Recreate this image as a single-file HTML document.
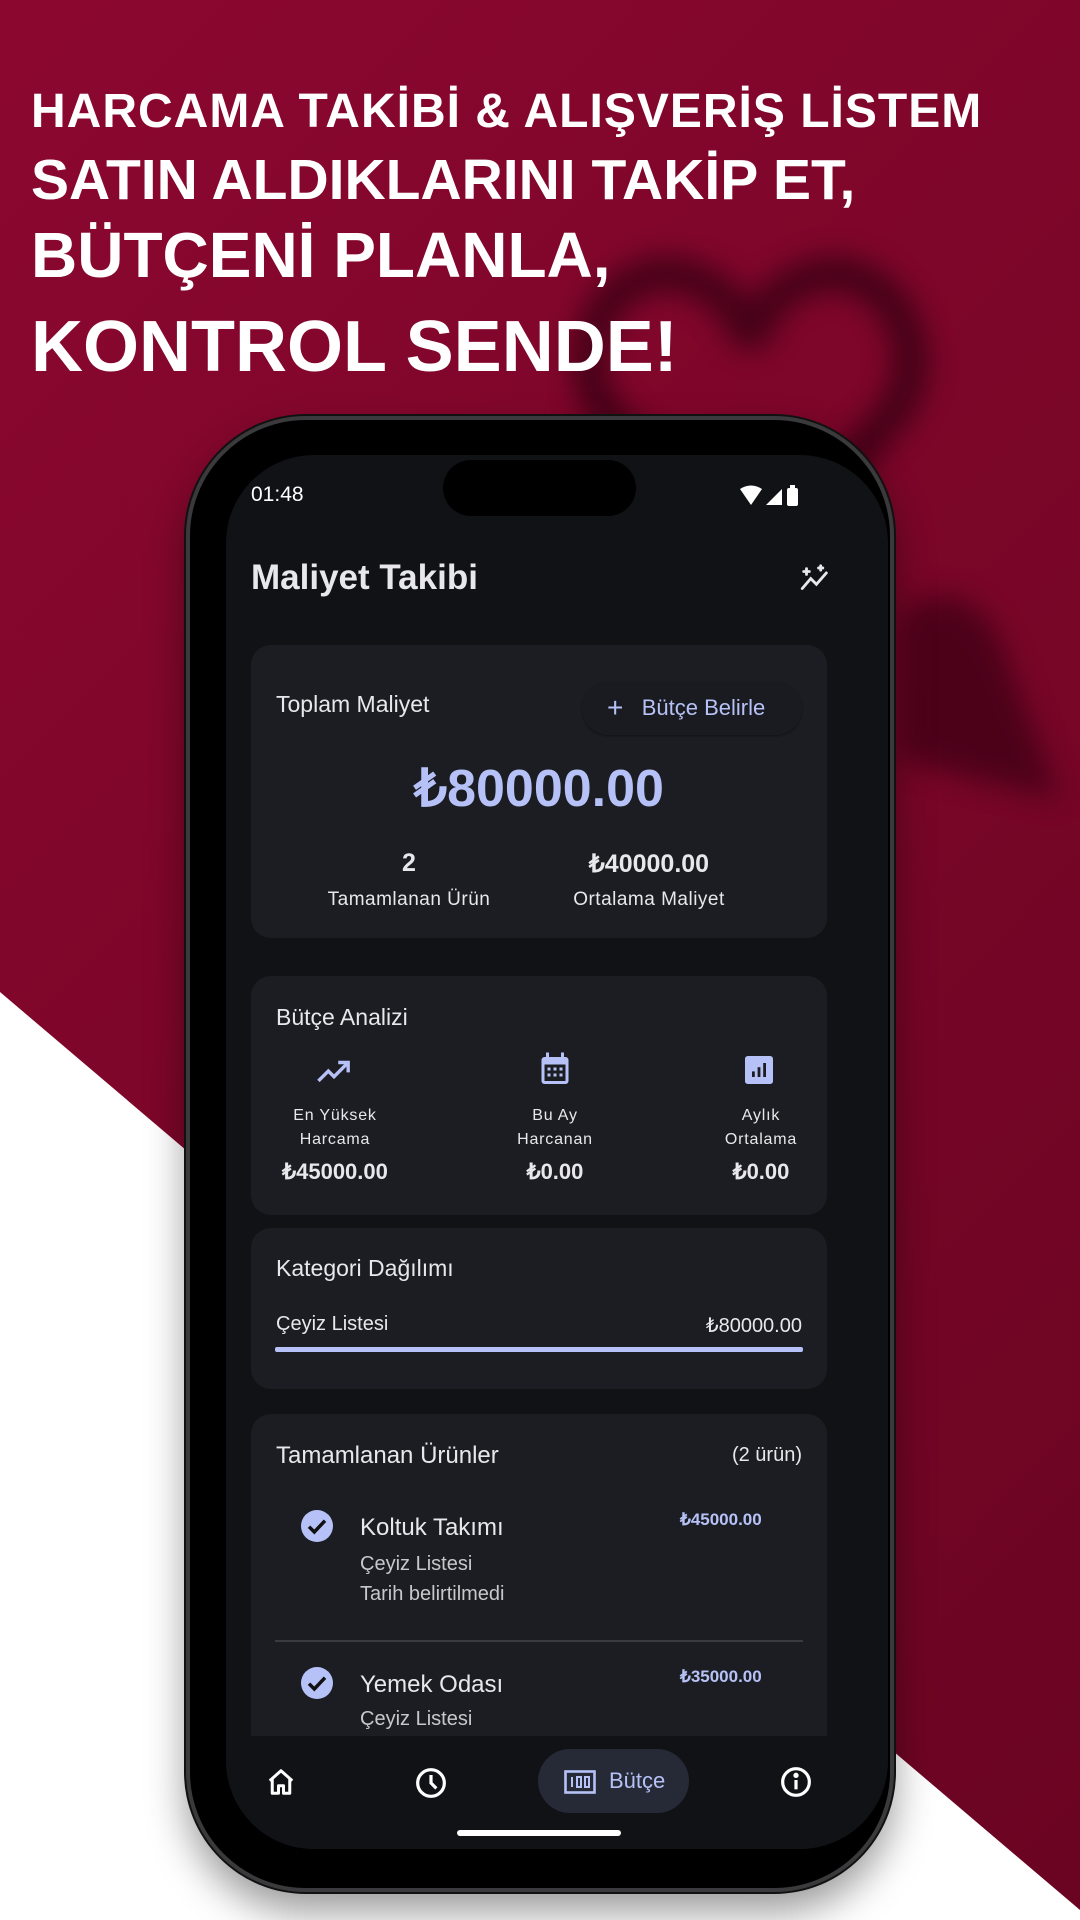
<!DOCTYPE html>
<html><head><meta charset="utf-8"><style>
*{margin:0;padding:0;box-sizing:border-box}
body{width:1080px;height:1920px;overflow:hidden;position:relative;font-family:"Liberation Sans",sans-serif;background:#fff}
.bg{position:absolute;inset:0;background:linear-gradient(135deg,#8c0730 0%,#7a0628 50%,#6a0422 100%);clip-path:polygon(0 0,1080px 0,1080px 1910px,0 992px)}
.heart{position:absolute;filter:blur(14px);opacity:.7}
.h{position:absolute;left:31px;color:#fff;font-weight:700;white-space:nowrap}
.a{position:absolute;white-space:nowrap}
.phone{position:absolute;left:186px;top:416px;width:708px;height:1476px;border-radius:120px;background:#000;border:4px solid #3a3a3c;box-shadow:0 0 0 2px #111,0 20px 40px rgba(0,0,0,.4)}
.screen{position:absolute;left:226px;top:455px;width:662px;height:1394px;border-radius:88px;background:#111216;overflow:hidden}
.card{position:absolute;left:25px;width:576px;background:#1c1d22;border-radius:20px}
.w{color:#e8e8ec}.b{color:#b6c2f7}
</style></head><body>
<div class="bg"></div>
<svg class="heart" style="left:560px;top:230px" width="380" height="380" viewBox="0 0 100 100"><path d="M50 90 L12 48 C0 30 15 8 32 12 C42 14 48 22 50 30 C52 22 58 14 68 12 C85 8 100 30 88 48 Z" fill="none" stroke="#2a0010" stroke-width="9"/></svg>
<svg class="heart" style="left:880px;top:580px" width="200" height="260" viewBox="0 0 100 130"><path d="M10 20 C20 0 50 5 60 30 L90 110 L10 90 Z" fill="#3a0014"/></svg>
<div class="h" style="top:84px;font-size:48px;letter-spacing:1px">HARCAMA TAKİBİ &amp; ALIŞVERİŞ LİSTEM</div>
<div class="h" style="top:147px;font-size:57px">SATIN ALDIKLARINI TAKİP ET,</div>
<div class="h" style="top:218px;font-size:64px">BÜTÇENİ PLANLA,</div>
<div class="h" style="top:306px;font-size:72px">KONTROL SENDE!</div>
<div class="phone"></div>
<div class="screen">
 <div class="a" style="left:25px;top:28px;font-size:21px;color:#fff">01:48</div>
 <div class="a" style="left:217px;top:5px;width:193px;height:56px;border-radius:28px;background:#000"></div>
 <svg class="a" style="left:514px;top:30px" width="64" height="22" viewBox="0 0 64 22"><path d="M0 4 Q11 -3 22 4 L11 20Z" fill="#fff"/><path d="M26 20 L42 4 L42 20Z" fill="#fff"/><rect x="47" y="3" width="11" height="18" rx="2" fill="#fff"/><rect x="50" y="0" width="5" height="4" fill="#fff"/></svg>
 <div class="a w" style="left:25px;top:103px;font-size:35px;font-weight:700">Maliyet Takibi</div>
 <svg class="a" style="left:572px;top:108px" width="34" height="34" viewBox="0 0 24 24" fill="none" stroke="#e8e8ec" stroke-width="2" stroke-linecap="round"><path d="M3 18 L9 11 L13 15 L20 7"/><path d="M6 4v4M4 6h4M16 2v3M14.5 3.5h3"/></svg>
 <div class="card" style="top:190px;height:293px">
  <div class="a w" style="left:25px;top:46px;font-size:23px">Toplam Maliyet</div>
  <div class="a" style="left:331px;top:37px;width:220px;height:53px;border-radius:27px;background:#1a1b20;box-shadow:0 1px 2px rgba(0,0,0,.4)"></div>
  <div class="a b" style="left:356px;top:45px;font-size:22px"><span style="font-size:28px;position:relative;top:2px">+</span>&nbsp;&nbsp; Bütçe Belirle</div>
  <div class="a b" style="left:0;width:576px;text-align:center;top:114px;font-size:52px;font-weight:700">₺80000.00</div>
  <div class="a w" style="left:58px;width:200px;text-align:center;top:204px;font-size:25px;font-weight:700">2</div>
  <div class="a w" style="left:298px;width:200px;text-align:center;top:204px;font-size:25px;font-weight:700">₺40000.00</div>
  <div class="a w" style="left:38px;width:240px;text-align:center;top:244px;font-size:19px;letter-spacing:.5px">Tamamlanan Ürün</div>
  <div class="a w" style="left:278px;width:240px;text-align:center;top:244px;font-size:19px;letter-spacing:.5px">Ortalama Maliyet</div>
 </div>
 <div class="card" style="top:521px;height:239px">
  <div class="a w" style="left:25px;top:28px;font-size:23px">Bütçe Analizi</div>
  <svg class="a" style="left:66px;top:83px" width="34" height="24" viewBox="0 0 24 16" fill="none" stroke="#b6c2f7" stroke-width="2.4"><path d="M1 15 L8 8 L12 12 L21 3"/><path d="M15 2h7v7" stroke-linejoin="miter"/></svg>
  <svg class="a" style="left:289px;top:76px" width="30" height="34" viewBox="0 0 20 22"><rect x="1" y="3" width="18" height="18" rx="2" fill="#b6c2f7"/><rect x="4" y="0" width="2" height="5" fill="#b6c2f7"/><rect x="14" y="0" width="2" height="5" fill="#b6c2f7"/><rect x="3" y="8" width="14" height="11" fill="#1c1d22"/><g fill="#b6c2f7"><rect x="5" y="10" width="2" height="2"/><rect x="9" y="10" width="2" height="2"/><rect x="13" y="10" width="2" height="2"/><rect x="5" y="14" width="2" height="2"/><rect x="9" y="14" width="2" height="2"/><rect x="13" y="14" width="2" height="2"/></g></svg>
  <svg class="a" style="left:494px;top:80px" width="28" height="28" viewBox="0 0 20 20"><rect width="20" height="20" rx="2" fill="#b6c2f7"/><rect x="5" y="11" width="2" height="4" fill="#1c1d22"/><rect x="9" y="8" width="2" height="7" fill="#1c1d22"/><rect x="13" y="5" width="2" height="10" fill="#1c1d22"/></svg>
  <div class="a w" style="left:0;width:168px;text-align:center;top:128px;font-size:16px;line-height:24px;letter-spacing:.8px">En Yüksek<br>Harcama</div>
  <div class="a w" style="left:220px;width:168px;text-align:center;top:128px;font-size:16px;line-height:24px;letter-spacing:.8px">Bu Ay<br>Harcanan</div>
  <div class="a w" style="left:426px;width:168px;text-align:center;top:128px;font-size:16px;line-height:24px;letter-spacing:.8px">Aylık<br>Ortalama</div>
  <div class="a w" style="left:-10px;width:188px;text-align:center;top:183px;font-size:22px;font-weight:700">₺45000.00</div>
  <div class="a w" style="left:220px;width:168px;text-align:center;top:183px;font-size:22px;font-weight:700">₺0.00</div>
  <div class="a w" style="left:426px;width:168px;text-align:center;top:183px;font-size:22px;font-weight:700">₺0.00</div>
 </div>
 <div class="card" style="top:773px;height:161px">
  <div class="a w" style="left:25px;top:27px;font-size:23px">Kategori Dağılımı</div>
  <div class="a w" style="left:25px;top:85px;font-size:20px">Çeyiz Listesi</div>
  <div class="a w" style="right:25px;top:85px;font-size:20px">₺80000.00</div>
  <div class="a" style="left:24px;top:119px;width:528px;height:5px;background:#b6c2f7;border-radius:2px"></div>
 </div>
 <div class="card" style="top:959px;height:480px">
  <div class="a w" style="left:25px;top:28px;font-size:24px">Tamamlanan Ürünler</div>
  <div class="a w" style="right:25px;top:30px;font-size:20px">(2 ürün)</div>
  <svg class="a" style="left:50px;top:96px" width="32" height="32" viewBox="0 0 24 24"><circle cx="12" cy="12" r="12" fill="#b6c2f7"/><path d="M6 12.5 L10 16.5 L18 8" fill="none" stroke="#111" stroke-width="2.6"/></svg>
  <div class="a w" style="left:109px;top:100px;font-size:24px">Koltuk Takımı</div>
  <div class="a" style="left:109px;top:139px;font-size:20px;color:#c8c8cc">Çeyiz Listesi</div>
  <div class="a" style="left:109px;top:169px;font-size:20px;color:#c8c8cc">Tarih belirtilmedi</div>
  <div class="a b" style="left:429px;top:96px;font-size:17px;font-weight:700">₺45000.00</div>
  <div class="a" style="left:24px;top:226px;width:528px;height:2px;background:#3a3b40"></div>
  <svg class="a" style="left:50px;top:253px" width="32" height="32" viewBox="0 0 24 24"><circle cx="12" cy="12" r="12" fill="#b6c2f7"/><path d="M6 12.5 L10 16.5 L18 8" fill="none" stroke="#111" stroke-width="2.6"/></svg>
  <div class="a w" style="left:109px;top:257px;font-size:24px">Yemek Odası</div>
  <div class="a" style="left:109px;top:294px;font-size:20px;color:#c8c8cc">Çeyiz Listesi</div>
  <div class="a b" style="left:429px;top:253px;font-size:17px;font-weight:700">₺35000.00</div>
 </div>
 <div class="a" style="left:0;top:1281px;width:662px;height:113px;background:#111216"></div>
 <svg class="a" style="left:40px;top:1312px" width="30" height="30" viewBox="0 0 24 24" fill="none" stroke="#fff" stroke-width="2.4" stroke-linejoin="round"><path d="M3 11 L12 3 L21 11 M5 9.5V21h5v-6h4v6h5V9.5"/></svg>
 <svg class="a" style="left:189px;top:1312px" width="32" height="32" viewBox="0 0 24 24" fill="none" stroke="#fff" stroke-width="2.4"><circle cx="12" cy="12" r="10"/><path d="M12 6v6l4 4"/></svg>
 <div class="a" style="left:312px;top:1294px;width:151px;height:64px;border-radius:32px;background:#262a36"></div>
 <svg class="a" style="left:338px;top:1315px" width="32" height="24" viewBox="0 0 32 24" fill="none" stroke="#b6c2f7" stroke-width="2.6"><rect x="1.5" y="1.5" width="29" height="21"/><path d="M8 7v10M13 7h4v10h-4zM21 7h4v10h-4z" stroke-width="2"/></svg>
 <div class="a b" style="left:383px;top:1313px;font-size:22px">Bütçe</div>
 <svg class="a" style="left:554px;top:1311px" width="32" height="32" viewBox="0 0 24 24" fill="none" stroke="#fff" stroke-width="2.4"><circle cx="12" cy="12" r="10"/><path d="M12 10.5v7"/><circle cx="12" cy="7" r=".8" fill="#fff"/></svg>
 <div class="a" style="left:231px;top:1375px;width:164px;height:6px;border-radius:3px;background:#fff"></div>
</div>
</body></html>
